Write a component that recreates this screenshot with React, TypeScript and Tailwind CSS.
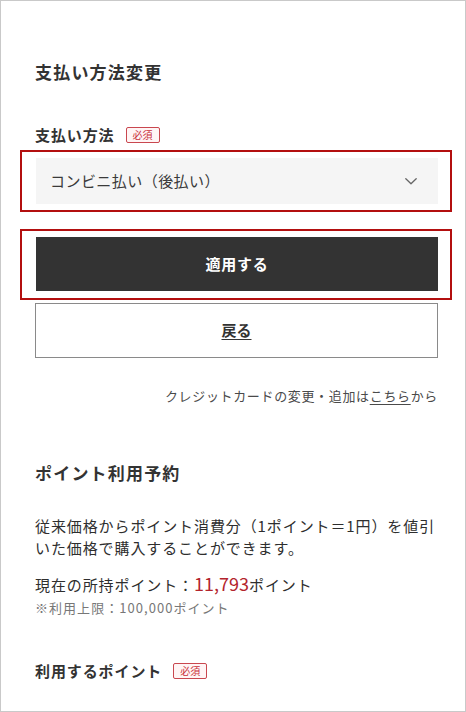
import React from "react";

function RequiredBadge() {
  return (
    <span className="ml-[11px] inline-flex h-[16px] w-[34px] items-center justify-center rounded-[2px] border border-[#c9474f] bg-[#fff5f5] text-[10px] leading-none text-[#c9303a]">
      必須
    </span>
  );
}

function Chevron() {
  return (
    <svg width="12" height="7" viewBox="0 0 12 7" fill="none" className="block">
      <path d="M0.8 0.8 L6 5.8 L11.2 0.8" stroke="#666" strokeWidth="1.3" strokeLinecap="round" strokeLinejoin="round" />
    </svg>
  );
}

export default function App() {
  return (
    <div
      className="box-border h-[712px] w-[466px] border border-[#c9c9c9] bg-white pl-[34px] pr-[27px] text-[#333]"
      style={{ fontFamily: '"Noto Sans CJK JP", "Noto Sans", sans-serif' }}
    >
      <h2 className="mt-[59px] text-[17px] font-bold leading-[24px] tracking-[0.07em]">支払い方法変更</h2>

      <div className="mt-[41px] flex h-[20px] items-center">
        <span className="text-[15px] font-bold leading-[20px] tracking-[0.06em]">支払い方法</span>
        <RequiredBadge />
      </div>

      <div className="-ml-[15px] -mr-[14px] mt-[5px] border-2 border-[#b30f0f] pb-[6px] pl-[14px] pr-[12px] pt-[6px]">
        <div className="flex h-[46px] items-center justify-between bg-[#f5f5f5] pl-[14px] pr-[21px]">
          <span className="text-[15px] leading-[20px] tracking-[0.03em] text-[#3a3a3a]">コンビニ払い（後払い）</span>
          <Chevron />
        </div>
      </div>

      <div className="-ml-[15px] -mr-[14px] mt-[17px] border-2 border-[#b30f0f] pb-[7px] pl-[14px] pr-[12px] pt-[6px]">
        <button className="flex h-[54px] w-full items-center justify-center bg-[#333] text-[15px] font-bold tracking-[0.05em] text-white">
          適用する
        </button>
      </div>

      <button className="mt-[3px] box-border flex h-[55px] w-full items-center justify-center border border-[#8a8a8a] bg-white text-[15px] font-bold text-[#333] underline underline-offset-[3px]">
        戻る
      </button>

      <p className="mt-[28px] text-right text-[13px] leading-[20px] tracking-[0.05em] text-[#4a4a4a]">
        クレジットカードの変更・追加は<span className="underline underline-offset-[3px]">こちら</span>から
      </p>

      <h2 className="mt-[55px] text-[17px] font-bold leading-[24px] tracking-[0.07em]">ポイント利用予約</h2>

      <p className="mt-[30px] text-[15px] leading-[22px] tracking-[0.06em] text-[#2e2e2e]">
        従来価格からポイント消費分（1ポイント＝1円）を値引いた価格で購入することができます。
      </p>

      <p className="mt-[12px] flex items-baseline text-[15px] leading-[24px] tracking-[0.06em] text-[#2e2e2e]">
        <span>現在の所持ポイント：</span>
        <span className="text-[18px] tracking-normal text-[#b3242c]">11,793</span>
        <span>ポイント</span>
      </p>

      <p className="mt-[2px] text-[13px] leading-[18px] tracking-[0.08em] text-[#777]">※利用上限：100,000ポイント</p>

      <div className="mt-[44px] flex h-[20px] items-center">
        <span className="text-[15px] font-bold leading-[20px] tracking-[0.06em]">利用するポイント</span>
        <RequiredBadge />
      </div>
    </div>
  );
}
